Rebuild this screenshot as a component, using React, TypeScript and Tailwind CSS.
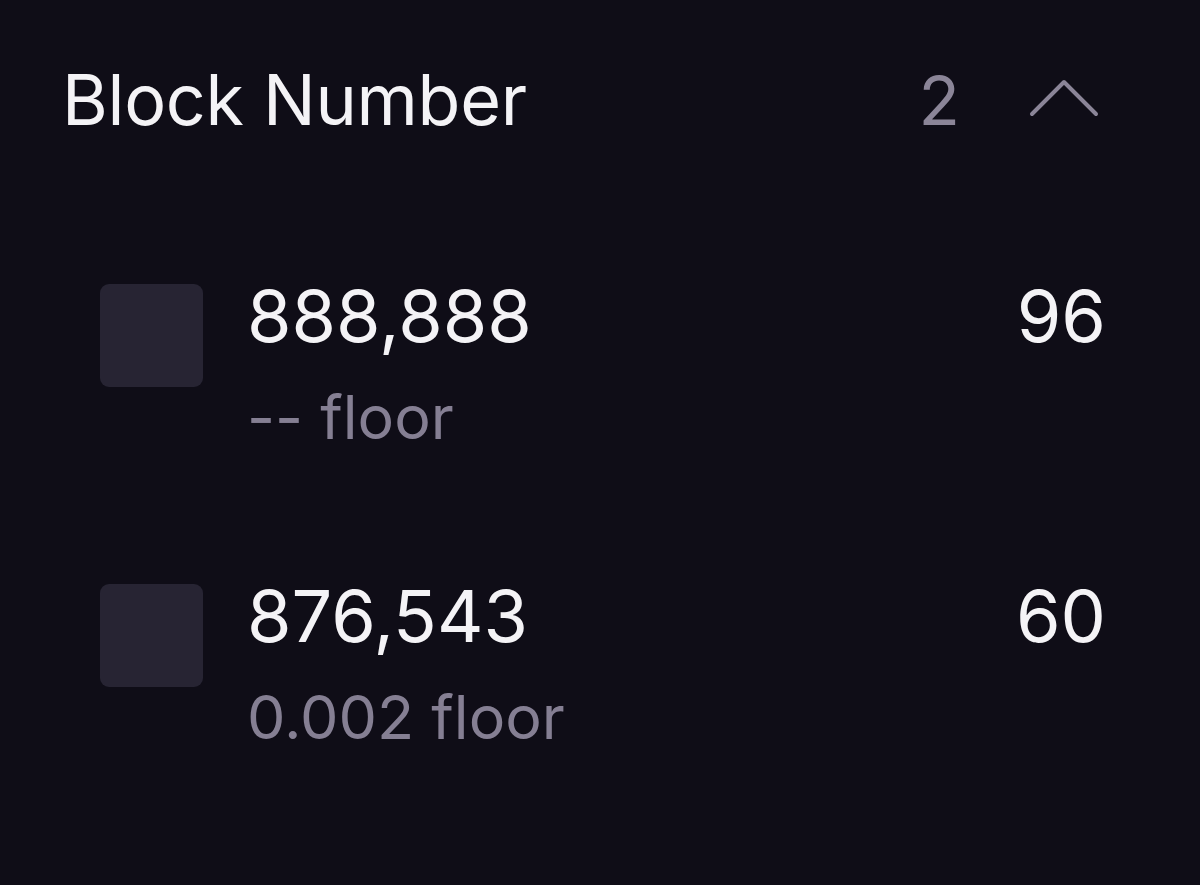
const rows = [
  { id: "888,888", floor: "-- floor", count: 96 },
  { id: "876,543", floor: "0.002 floor", count: 60 },
];

export default function App() {
  return (
    <div
      className="min-h-[885px] w-full bg-[#0f0d17] text-[#f4f3f6] pl-[62px] pr-[94px] pt-[58px]"
      style={{ fontFamily: "Inter, 'Noto Sans', sans-serif" }}
    >
      {/* Header */}
      <div className="flex items-center justify-between h-[84px]">
        <h2 className="text-[70px] leading-none tracking-[-0.3px]">Block Number</h2>
        <div className="flex items-center gap-[69px]">
          <span className="text-[68px] leading-none text-[#8b8598]">2</span>
          <svg width="70" height="42" viewBox="0 0 70 42" fill="none" className="mr-[7px] -mt-[2px]">
            <polyline
              points="3,36 35,4 67,36"
              stroke="#8b8598"
              strokeWidth="4"
              strokeLinecap="round"
              strokeLinejoin="round"
            />
          </svg>
        </div>
      </div>

      {/* Rows */}
      <div className="flex flex-col gap-[132px] mt-[142px] pl-[38px]">
        {rows.map((r) => (
          <div key={r.id} className="flex items-start">
            <div className="w-[103px] h-[103px] rounded-[9px] bg-[#272433] shrink-0" />
            <div className="flex flex-col ml-[44px] flex-1">
              <span className="text-[72px] leading-[64px]">{r.id}</span>
              <span className="text-[61px] leading-[70px] mt-[34px] text-[#857f93]">{r.floor}</span>
            </div>
            <span className="text-[72px] leading-[64px]">{r.count}</span>
          </div>
        ))}
      </div>
    </div>
  );
}
